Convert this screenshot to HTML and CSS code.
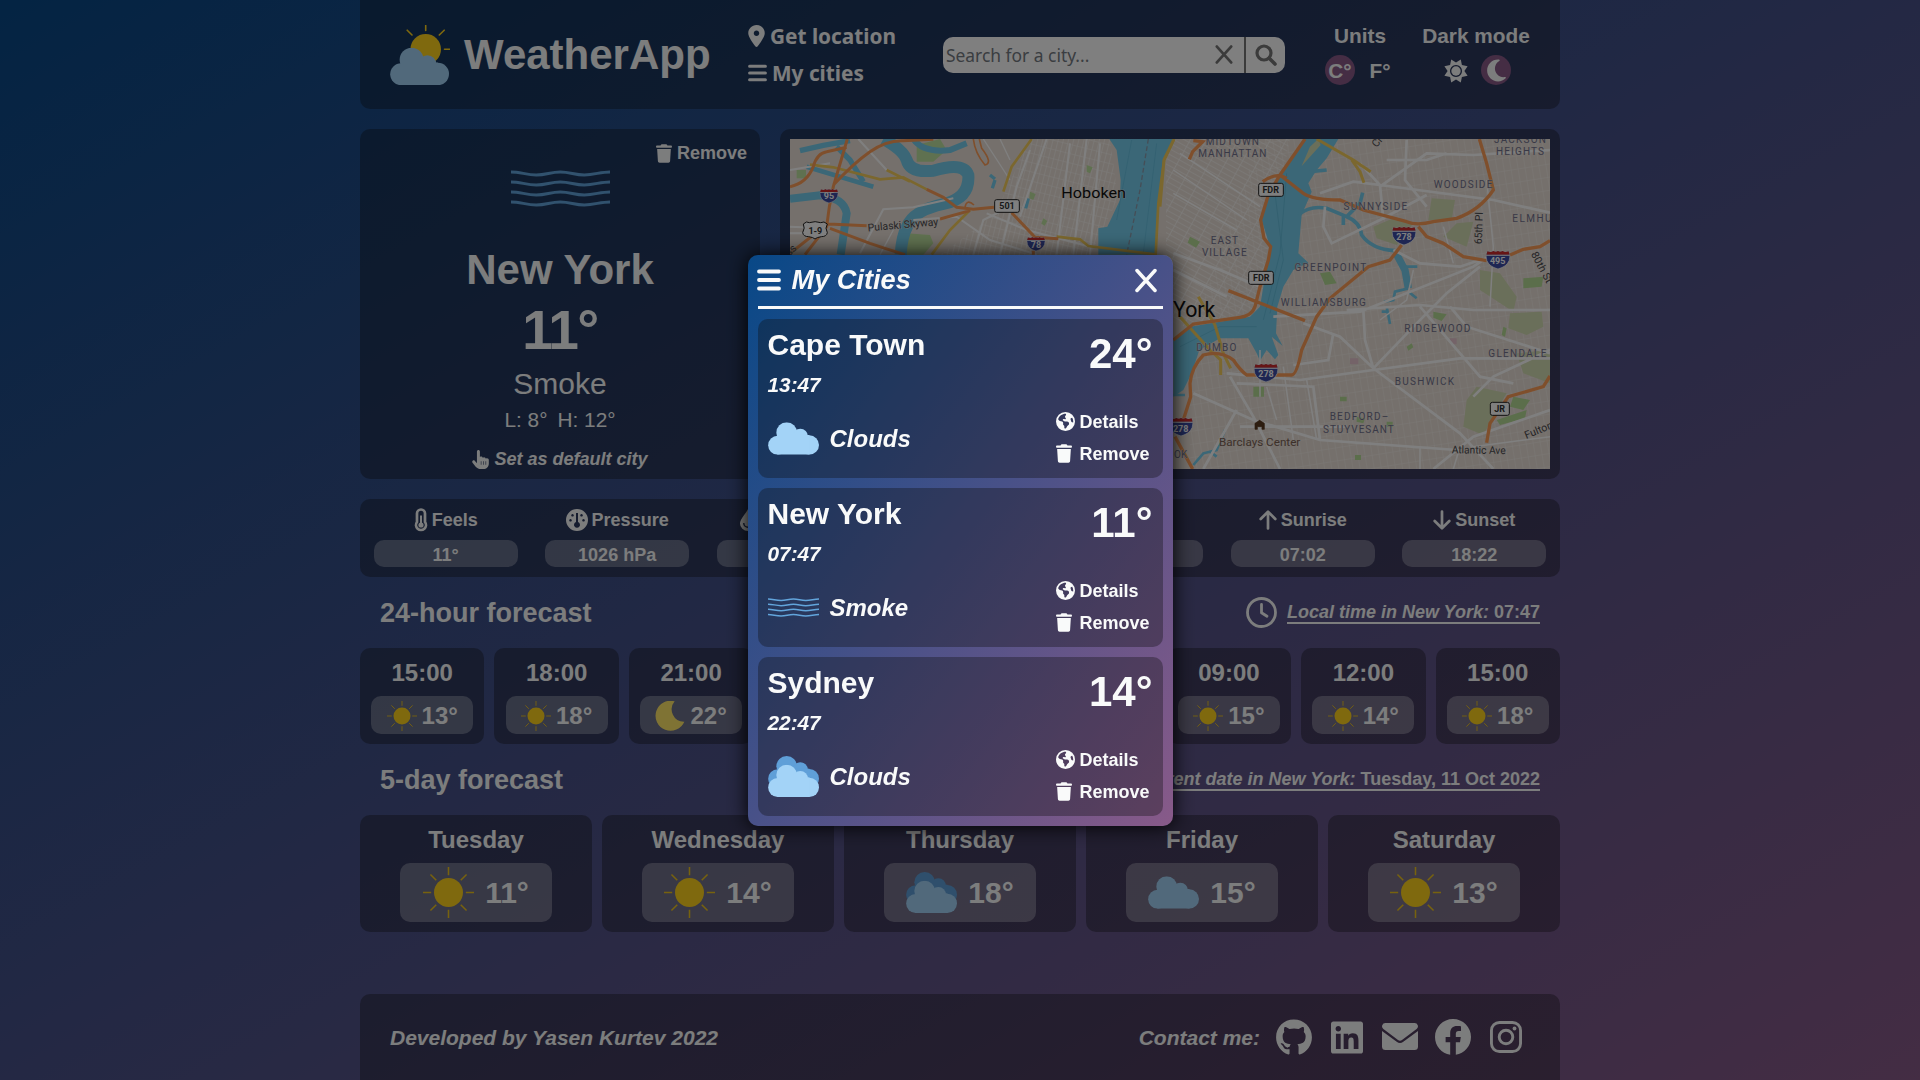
FILE: index.html
```html
<!DOCTYPE html>
<html lang="en">
<head>
<meta charset="utf-8">
<title>WeatherApp</title>
<link rel="stylesheet" href="styles.css">
</head>
<body>
<svg class="sprite" aria-hidden="true">
  <symbol id="bars" viewBox="0 0 24 22"><path d="M2 2.5H22M2 11H22M2 19.5H22" stroke="currentColor" stroke-width="3.8" stroke-linecap="round"/></symbol>
  <symbol id="cross" viewBox="0 0 22 24"><path d="M2 2L20 22M20 2L2 22" stroke="currentColor" stroke-width="3.5" stroke-linecap="round"/></symbol>
  <symbol id="pin" viewBox="0 0 384 512"><path fill="currentColor" d="M215.7 499.2C267 435 384 279.4 384 192C384 86 298 0 192 0S0 86 0 192c0 87.4 117 243 168.3 307.2c12.3 15.3 35.1 15.3 47.4 0zM192 256c-35.3 0-64-28.7-64-64s28.7-64 64-64s64 28.7 64 64s-28.7 64-64 64z"/></symbol>
  <symbol id="search" viewBox="0 0 22 22"><circle cx="9" cy="9" r="7" fill="none" stroke="currentColor" stroke-width="3.2"/><path d="M14.2 14.2L20 20" stroke="currentColor" stroke-width="3.6" stroke-linecap="round"/></symbol>
  <symbol id="trash" viewBox="0 0 448 512"><path fill="currentColor" d="M135.2 17.7L128 32H32C14.3 32 0 46.3 0 64S14.3 96 32 96H416c17.7 0 32-14.3 32-32s-14.3-32-32-32H320l-7.2-14.3C307.4 6.8 296.3 0 284.2 0H163.8c-12.1 0-23.2 6.8-28.6 17.7zM416 128H32L53.2 467c1.6 25.3 22.6 45 47.9 45H346.9c25.3 0 46.3-19.7 47.9-45L416 128z"/></symbol>
  <symbol id="globe" viewBox="0 0 512 512"><path fill="currentColor" fill-rule="evenodd" d="M57.7 193l9.4 16.4c8.3 14.5 21.9 25.2 38 29.8L163 255.7c17.2 4.9 29 20.6 29 38.5v39.9c0 11 6.2 21 16 25.9s16 14.9 16 25.9v39c0 15.6 14.9 26.9 29.9 22.6c16.1-4.6 28.6-17.5 32.7-33.8l2.8-11.2c4.2-16.9 15.2-31.4 30.3-40l8.1-4.6c15-8.5 24.2-24.5 24.2-41.7v-8.3c0-12.7-5.1-24.9-14.1-33.9l-3.9-3.9c-9-9-21.2-14.1-33.9-14.1H257c-11.1 0-22.1-2.9-31.8-8.4l-34.5-19.7c-4.3-2.5-7.6-6.5-9.2-11.2c-3.2-9.6 1.1-20 10.2-24.5l5.9-3c6.6-3.3 14.3-3.9 21.3-1.5l23.2 7.7c8.2 2.7 17.2-.4 21.9-7.5c4.7-7 4.2-16.3-1.2-22.8l-13.6-16.3c-10-12-9.9-29.5 .3-41.3l15.7-18.3c8.8-10.3 10.2-25 3.5-36.7l-2.4-4.2c-3.5-.2-6.9-.3-10.4-.3C163.1 48 84.4 108.9 57.7 193zM464 256c0-36.8-9.6-71.4-26.4-101.5L412 164.8c-15.7 6.3-23.8 23.8-18.5 39.8l16.9 50.7c3.5 10.4 12 18.3 22.6 20.9l29.1 7.3c1.2-9 1.8-18.2 1.8-27.5zM0 256a256 256 0 1 1 512 0A256 256 0 1 1 0 256z"/></symbol>
  <symbol id="hand" viewBox="0 0 448 512"><path fill="currentColor" fill-rule="evenodd" d="M128 40c0-22.100 17.900-40 40-40s40 17.900 40 40V188c8.500-7.600 19.700-12 32-12c20.600 0 38.200 13 45 31.200c8.800-9.300 21.200-15.200 35-15.200c25.300 0 46 19.500 47.900 44.300c8.500-7.700 19.800-12.300 32.100-12.300c26.500 0 48 21.500 48 48v96c0 79.500-64.500 144-144 144H231c-49 0-96-20-131-55L10 345c-14-17-13-42 3-56c17-14 42-13 56 3l59 62V40zM232 304v96h16v-96zm64 0v96h16v-96zm64 0v96h16v-96z"/></symbol>
  <symbol id="thermo" viewBox="0 0 14 24"><path d="M3 5.500a4 4 0 0 1 8 0V14a5 5 0 1 1-8 0z" fill="none" stroke="currentColor" stroke-width="2.700"/><circle cx="7" cy="17" r="2.600" fill="currentColor"/><path d="M7 7.500V16" stroke="currentColor" stroke-width="2"/></symbol>
  <symbol id="gauge" viewBox="0 0 22 22"><path fill="currentColor" fill-rule="evenodd" d="M11 0a11 11 0 1 1 0 22a11 11 0 0 1 0-22zM10 4v9a3 3 0 1 0 2 0V4zM6.500 5a1.300 1.300 0 1 0 .01 0zM15.500 5a1.300 1.300 0 1 0 .01 0zM4.500 10a1.300 1.300 0 1 0 .01 0zM17.500 10a1.300 1.300 0 1 0 .01 0z"/></symbol>
  <symbol id="drop" viewBox="0 0 16 22"><path fill="currentColor" fill-rule="evenodd" d="M8 0C9 3 16 10 16 14.500A8 7.500 0 0 1 0 14.500C0 10 7 3 8 0zM3 14a5 5 0 0 0 5 5v-1.500A3.500 3.500 0 0 1 4.500 14z"/></symbol>
  <symbol id="up" viewBox="0 0 18 20"><path d="M9 18.500V2M1.700 9L9 1.700L16.300 9" fill="none" stroke="currentColor" stroke-width="2.700" stroke-linecap="round" stroke-linejoin="round"/></symbol>
  <symbol id="down" viewBox="0 0 18 20"><path d="M9 1.500V18M1.700 11L9 18.300L16.300 11" fill="none" stroke="currentColor" stroke-width="2.700" stroke-linecap="round" stroke-linejoin="round"/></symbol>
  <symbol id="clock" viewBox="0 0 31 31"><circle cx="15.500" cy="15.500" r="14" fill="none" stroke="currentColor" stroke-width="2.800"/><path d="M15.500 7.500V15.800L21 19.300" fill="none" stroke="currentColor" stroke-width="2.800" stroke-linecap="round" stroke-linejoin="round"/></symbol>
  <symbol id="brightness" viewBox="0 0 26 26"><path fill="currentColor" fill-rule="evenodd" d="M8.200 1.400L13 4.600L17.800 1.400L18.900 7.100L24.600 8.200L21.400 13L24.600 17.800L18.900 18.900L17.800 24.600L13 21.400L8.200 24.600L7.100 18.900L1.400 17.800L4.600 13L1.400 8.200L7.100 7.100zM13 7a6 6 0 1 0 .01 0z"/><circle cx="13" cy="13" r="4.700" fill="currentColor"/></symbol>
  <symbol id="night" viewBox="0 0 384 512"><path fill="currentColor" d="M223.500 32C100 32 0 132.300 0 256S100 480 223.500 480c60.600 0 115.500-24.200 155.800-63.400c5-4.900 6.300-12.500 3.100-18.700s-10.100-9.700-17-8.500c-9.800 1.700-19.800 2.600-30.100 2.600c-96.900 0-175.500-78.800-175.500-176c0-65.800 36-123.100 89.300-153.300c6.100-3.500 9.200-10.500 7.700-17.300s-7.300-11.900-14.300-12.500c-6.300-.5-12.600-.8-19-.8z"/></symbol>
  <symbol id="github" viewBox="0 0 496 512"><path fill="currentColor" d="M165.900 397.400c0 2-2.300 3.600-5.200 3.600-3.300.3-5.600-1.300-5.600-3.600 0-2 2.300-3.600 5.200-3.600 3-.3 5.600 1.300 5.600 3.600zM244.800 8C106.100 8 0 113.300 0 252c0 110.900 69.800 205.800 169.500 239.200 12.800 2.300 17.300-5.600 17.300-12.100 0-6.200-.3-40.400-.3-61.400 0 0-70 15-84.700-29.800 0 0-11.400-29.100-27.800-36.600 0 0-22.900-15.700 1.600-15.400 0 0 24.900 2 38.600 25.800 21.900 38.600 58.600 27.500 72.900 20.900 2.300-16 8.800-27.100 16-33.700-55.900-6.200-112.300-14.300-112.300-110.500 0-27.500 7.600-41.300 23.600-58.900-2.600-6.500-11.100-33.300 2.600-67.900 20.900-6.500 69 27 69 27 20-5.600 41.500-8.500 62.800-8.500s42.800 2.900 62.800 8.500c0 0 48.100-33.600 69-27 13.700 34.700 5.200 61.400 2.600 67.900 16 17.700 25.800 31.500 25.800 58.900 0 96.500-58.900 104.200-114.800 110.500 9.200 7.900 17 22.900 17 46.400 0 33.700-.3 75.400-.3 83.600 0 6.500 4.600 14.400 17.300 12.100C428.200 457.800 496 362.900 496 252 496 113.300 383.500 8 244.800 8z"/></symbol>
  <symbol id="linkedin" viewBox="0 0 448 512"><path fill="currentColor" d="M416 32H31.900C14.300 32 0 46.500 0 64.300v383.400C0 465.500 14.300 480 31.900 480H416c17.600 0 32-14.500 32-32.300V64.300c0-17.800-14.400-32.300-32-32.300zM135.400 416H69V202.200h66.500V416zm-33.200-243c-21.300 0-38.500-17.300-38.500-38.500S80.900 96 102.200 96c21.200 0 38.500 17.300 38.500 38.500 0 21.300-17.200 38.500-38.500 38.500zm282.100 243h-66.400V312c0-24.800-.5-56.700-34.500-56.700-34.600 0-39.900 27-39.900 54.900V416h-66.400V202.200h63.700v29.200h.9c8.900-16.800 30.600-34.500 62.900-34.500 67.200 0 79.700 44.300 79.700 101.900V416z"/></symbol>
  <symbol id="mail" viewBox="0 0 36 28"><path fill="currentColor" d="M3.400 0H32.600A3.400 3.400 0 0 1 34.600 6.100L20 17a3.400 3.400 0 0 1-4 0L1.400 6.100A3.400 3.400 0 0 1 3.400 0zM0 7.900L14.700 18.800a5.500 5.500 0 0 0 6.600 0L36 7.900V23.500A3.500 3.500 0 0 1 32.500 27H3.500A3.500 3.500 0 0 1 0 23.500z"/></symbol>
  <symbol id="facebook" viewBox="8 8 496 494"><path fill="currentColor" d="M504 256C504 119 393 8 256 8S8 119 8 256c0 123.780 90.690 226.380 209.250 245V327.690h-63V256h63v-54.640c0-62.150 37-96.480 93.670-96.480 27.140 0 55.520 4.840 55.520 4.840v61h-31.280c-30.800 0-40.410 19.120-40.410 38.730V256h68.780l-11 71.690h-57.780V501C413.310 482.380 504 379.780 504 256z"/></symbol>
  <symbol id="instagram" viewBox="0 0 32 32"><rect x="1.450" y="1.450" width="29.100" height="29.100" rx="8" fill="none" stroke="currentColor" stroke-width="2.900"/><circle cx="16" cy="16" r="6.800" fill="none" stroke="currentColor" stroke-width="2.900"/><circle cx="24.500" cy="7.500" r="1.900" fill="currentColor"/></symbol>

  <symbol id="w-sun" viewBox="0 0 50 50"><circle cx="25" cy="25" r="14.200" fill="#ffd21c"/><path d="M25 0V8M25 42V50M0 25H8M42 25H50M7.300 7.300L13 13M37 37L42.700 42.700M42.700 7.300L37 13M13 37L7.300 42.700" stroke="#efc41c" stroke-width="1.500"/></symbol>
  <symbol id="w-moon" viewBox="0 0 90 90"><path fill="#ffe669" d="M59 1A45 45 0 1 0 88 62A37 37 0 0 1 59 1z"/></symbol>
  <symbol id="cloud-shape" viewBox="0 0 153 97"><circle cx="29" cy="68.500" r="28.500"/><circle cx="56" cy="31" r="31"/><circle cx="97" cy="42" r="23"/><circle cx="124" cy="68" r="29"/><rect x="28" y="38" width="96" height="59"/></symbol>
  <symbol id="w-cloud" viewBox="0 0 153 97"><use href="#cloud-shape" width="153" height="97" fill="#a3d3f7"/></symbol>
  <symbol id="w-clouds" viewBox="0 0 153 123"><use href="#cloud-shape" width="153" height="97" fill="#5f9fd8"/><use href="#cloud-shape" y="26" width="153" height="97" fill="#a3d3f7"/></symbol>
  <symbol id="w-smoke" viewBox="0 0 297 111"><g fill="none" stroke="#62a5dc" stroke-width="8.500"><path id="wave" d="M0 6C28 6 46 15 76 15S118 6 148 6S190 15 220 15S268 6 297 6"/><use href="#wave" y="30"/><use href="#wave" y="60"/><use href="#wave" y="90"/></g></symbol>
  <symbol id="w-logo" viewBox="0 0 60 60"><circle cx="35.700" cy="24.300" r="15.300" fill="#ffd21c"/><path d="M35.700 .5V5.500M54.500 24.300H59.500M49.300 10L54.200 5.200M22 10L17.200 5.200" stroke="#ffd21c" stroke-width="1.600" stroke-linecap="round"/><use href="#cloud-shape" y="22.800" width="59" height="37.400" fill="#a3d3f7"/></symbol>

  <symbol id="interstate" viewBox="0 0 72 56"><path d="M5 3Q16 7 22 2Q30 6 36 2Q42 6 50 2Q56 7 67 3Q74 18 69 30Q62 48 36 55Q10 48 3 30Q-2 18 5 3z" fill="#3c4da6" stroke="#fff" stroke-width="2"/><path d="M5 3Q16 7 22 2Q30 6 36 2Q42 6 50 2Q56 7 67 3L70 13H2z" fill="#cf2a2a"/><path d="M2 14.500H70" stroke="#fff" stroke-width="3"/></symbol>
</svg>

<div class="page">
  <header class="header panel">
    <div class="logo"><svg width="60" height="60"><use href="#w-logo"/></svg><h1>WeatherApp</h1></div>
    <nav class="nav">
      <a><svg width="17" height="22"><use href="#pin"/></svg>Get location</a>
      <a><svg class="nav-bars" width="19" height="18"><use href="#bars"/></svg>My cities</a>
    </nav>
    <div class="search">
      <span class="search-text">Search for a city...</span>
      <svg class="search-clear" width="18" height="19"><use href="#cross"/></svg>
      <span class="search-go"><svg width="22" height="22"><use href="#search"/></svg></span>
    </div>
    <div class="setting units"><span>Units</span><div class="options"><b class="on">C°</b><b>F°</b></div></div>
    <div class="setting mode"><span>Dark mode</span><div class="options"><b><svg width="26" height="26"><use href="#brightness"/></svg></b><b class="on"><svg width="19" height="25"><use href="#night"/></svg></b></div></div>
  </header>

  <section class="top">
    <div class="city panel">
      <div class="city-remove"><svg width="16" height="19"><use href="#trash"/></svg>Remove</div>
      <svg class="city-icon" width="99" height="37"><use href="#w-smoke"/></svg>
      <h2>New York</h2>
      <div class="city-temp">11°</div>
      <div class="city-state">Smoke</div>
      <div class="city-range"><span>L: 8°</span><span>H: 12°</span></div>
      <div class="city-default"><svg width="17" height="19"><use href="#hand"/></svg>Set as default city</div>
    </div>
    <div class="map-card panel">
      <svg class="map" width="760" height="330" viewBox="0 0 760 330">
        <defs>
          <pattern id="streets" width="7" height="13" patternUnits="userSpaceOnUse" patternTransform="rotate(-9)"><path d="M0 0H7M0 0V13" stroke="#fff" stroke-width=".9" opacity=".6"/></pattern>
          <pattern id="avenues" width="5" height="14" patternUnits="userSpaceOnUse" patternTransform="rotate(-61)"><path d="M0 0H5M0 0V14" stroke="#fff" stroke-width="1.300" opacity=".75"/></pattern>
          <pattern id="blocks" width="5" height="9" patternUnits="userSpaceOnUse" patternTransform="rotate(14)"><path d="M0 0H5M0 0V9" stroke="#fff" stroke-width="1.200" opacity=".75"/></pattern>
        </defs>
        <rect width="760" height="330" fill="#ebe1d8"/>
        <path d="M470 0H760V330H400V200z" fill="url(#streets)"/>
        <path d="M376 0H500L480 100L465 170L400 190L376 180z" fill="url(#avenues)"/>
        <path d="M240 0H320L328 60L300 116H150L205 75z" fill="url(#blocks)"/>

        <g transform="translate(-20 -19) scale(.33333)" fill="none">
          <g fill="#bfe3a0"><path d="M440 75L510 57L530 90L490 125L440 125z"/><path d="M410 340L480 345L490 370L460 404H400z"/><path d="M780 215L797 222L790 240L778 235zM950 135L968 142L960 160L950 155zM1130 367h20v18h-20zM820 295l12 8-8 14-10-6z"/><path d="M80 150h28v25h-28z"/></g>
          <g stroke="#76cfee">
            <path d="M340 57Q400 90 410 120Q420 160 490 152Q580 125 595 165Q600 235 520 252Q430 272 412 318Q395 350 392 404" stroke-width="36"/>
            <path d="M430 57Q460 100 540 90L590 70" stroke-width="18"/>
            <path d="M60 236L150 226Q222 234 230 280L212 404" stroke-width="24"/>
            <path d="M110 140L310 200" stroke-width="14"/>
            <path d="M90 92L160 76L240 62M200 80L240 120L280 185" stroke-width="16"/>
            <path d="M660 165l15 12M675 180l-8 25M775 235l-8 30" stroke-width="10"/>
          </g>
          <path d="M1018 57H1212L1180 130L1165 260L1155 404H985V325L1012 320L1050 240L1052 180L1040 90z" fill="#76cfee"/>
          <path d="M1135 57L1110 210L1070 404" stroke="#8a9cae" stroke-width="4" stroke-dasharray="14 8"/>
          <path d="M1160 70L1120 400M1085 60L1040 300" stroke="#62bddf" stroke-width="2"/>
          <g stroke="#fff" stroke-width="6">
            <path d="M60 150L180 130M60 320L170 325M265 57L350 150M60 340h40M270 400L340 268L430 262L550 235M430 300L560 290L660 360L800 404M610 404L640 300L720 260M780 90L740 200L690 404M830 57L750 290M900 70L860 404M950 57L910 404M650 280L770 330L960 380M990 70L960 404"/>
            <path d="M640 57L720 180M330 404L370 330M690 57L720 120" stroke-width="4"/>
          </g>
          <g stroke="#f6cf5c" stroke-width="8"><path d="M120 134L190 142L330 178L400 172L470 208M350 150L420 185M785 57L725 140L700 215M600 270L540 330L485 404M860 350L930 358L955 378L1160 404M1212 57L1182 120L1165 250L1157 404"/></g>
          <g stroke="#ff9e58" stroke-width="9">
            <path d="M60 200Q110 190 130 140Q140 100 170 95L230 82M232 57L190 200L178 260L170 320L105 404M190 195Q250 130 300 95Q350 60 400 62L490 58M470 208L520 232L560 262L610 268L672 262M510 297L600 272M175 312L290 317M180 325L300 370L345 385L405 404M60 400L130 345M725 278L795 352L865 356M790 404v-12"/>
            <path d="M610 57Q615 100 645 135Q670 130 635 85L628 57M585 262Q590 235 612 255" stroke-width="5"/>
          </g>
        </g>

        <g transform="translate(370 -19) scale(.33333)" fill="none">
          <g fill="#d5deb4"><path d="M815 235L885 240L875 300L805 300zM640 320L700 295L760 310L710 375L650 355zM890 310L940 305L920 380L850 350zM960 450L1020 460L1070 530L1060 575L960 510zM1050 580L1145 575L1150 620L1100 645L1045 625zM950 800L1040 820L1010 870L970 945L910 920L920 840zM1070 700L1170 690V790L1090 760z"/></g>
          <g fill="#b6dd97"><path d="M480 460L510 455L530 490L495 495zM1090 475L1150 470L1145 500L1090 505zM1010 900L1100 870L1095 895L1020 915zM1060 830L1110 840L1090 870L1050 860zM540 830h20v14h-20zM740 680l15-10 5 12-15 10zM280 800h32v30h-32zM820 575l40 8-15 20-25-10zM90 350l30 15-12 18-25-15zM590 890l25 5-5 15-20-5zM1030 620l10 5-5 25-10-5zM680 905h18v15h-18zM585 1005h18v15h-18z"/></g>
          <path d="M570 715h25v18h-25zM870 655h20v18h-20z" fill="#e8c6d0"/>
          <path d="M0 57H42L10 110L0 170z" fill="#76cfee"/>
          <path d="M430 57H535L500 115L470 150L445 190L455 215L425 285L415 400L445 428L400 450L370 500L352 560L348 640L368 678L335 650L355 705L345 718L320 690L300 722L290 700L265 655L180 655L118 690L95 760L70 810L40 830V660L90 620L270 590L300 560L330 380L305 300L330 210L390 120z" fill="#76cfee"/>
          <path d="M450 80L475 57L482 75L425 138z" fill="#d5deb4"/>
          <path d="M345 220L370 420L330 580M380 160L360 400L310 600M60 680L180 620L290 620" stroke="#5fb9da" stroke-width="2"/>
          <g stroke="#76cfee"><path d="M415 285Q450 255 500 265L560 290Q600 305 605 345Q635 388 705 392M550 285v30M560 290L600 250L608 218M500 150L450 155" stroke-width="11"/><path d="M708 400L735 450L745 505" stroke-width="22"/><path d="M735 440H772M745 505L705 515L700 540L672 545M745 515L770 535M680 560L690 612M665 575h20M40 825h35M100 1035L130 1000L170 990L195 930M150 995L170 1010" stroke-width="8"/></g>
          <g stroke="#fff" stroke-width="8">
            <path d="M480 220L580 185L660 195L1000 240L1170 278M495 260L490 320L515 370L660 300L800 225M660 200L800 100L940 105L1170 90M600 130L660 195L670 300M680 120H800L860 100M740 60L735 180L800 260"/>
            <path d="M40 400L180 450L300 500M40 450L200 530M340 590L600 575L940 440L1000 400M430 610L540 650L640 745L900 940L1000 1047M200 760L420 780L640 750L900 715H1170M560 570L780 555L940 570H1170M640 745L770 610L860 520L960 440M100 820L280 900L480 960L890 990M210 770L280 890L360 1047M230 870L130 1047M520 640L505 720L400 735M610 570L615 660L640 745M780 560L900 700L960 770L1060 790M820 1047L940 950L1170 870M870 560L920 620L1170 700M940 830L1000 770L1170 690M700 390L780 430L900 440L960 420M240 920H560M230 790L460 800L480 960"/>
            <path d="M300 690V830M320 800L350 900M370 740L400 960M440 780L470 960M780 980V1047M900 980L880 1047M940 980L1170 950M980 180L1000 380L990 560M850 320L880 430M760 450L740 540L660 600M60 100L300 260M40 150L260 300M40 220L230 330" stroke-width="4.500"/>
          </g>
          <g stroke="#f6cf5c" stroke-width="9"><path d="M470 57L580 120L632 155M575 120L600 155L612 188M42 57L12 120L0 260M115 530L165 615L190 700L212 745M60 590L150 690L182 720V765"/></g>
          <g stroke="#ff9e58" stroke-width="10">
            <path d="M435 57L360 165L325 225L302 300L312 355L332 380L325 420L300 500L285 560Q275 588 240 592L100 612L40 660M360 165L430 220Q460 240 540 240L610 270L740 305Q770 318 820 305L890 295Q960 270 1000 210L980 130L958 57M775 320L800 350L850 370L910 410L980 422M1050 405L1090 388L1140 380L1170 362M205 512L435 602M725 375L690 420L625 440L510 535L470 590L425 690Q410 765 395 765H260Q240 750 220 720Q180 690 130 705Q95 740 90 790L92 830L70 900M45 950L98 1047M980 968L990 910L1045 830L1150 800L1170 768M100 62L128 65L98 95L88 118M308 185Q350 155 380 175"/>
          </g>
        </g>

        <g class="map-areas" transform="translate(370 -19) scale(.33333)">
          <text x="217" y="74" textLength="160">MIDTOWN</text><text x="217" y="110" textLength="204">MANHATTAN</text>
          <text x="193" y="371" textLength="82">EAST</text><text x="193" y="408" textLength="134">VILLAGE</text>
          <text x="511" y="454" textLength="215">GREENPOINT</text><text x="490" y="559" textLength="255">WILLIAMSBURG</text>
          <text x="646" y="269" textLength="191">SUNNYSIDE</text><text x="909" y="204" textLength="176">WOODSIDE</text>
          <text x="1080" y="68" textLength="156">JACKSON</text><text x="1080" y="104" textLength="144">HEIGHTS</text>
          <text x="1127" y="305" textLength="140">ELMHUR</text>
          <text x="832" y="635" textLength="198">RIDGEWOOD</text><text x="1072" y="710" textLength="174">GLENDALE</text>
          <text x="793" y="794" textLength="178">BUSHWICK</text><text x="169" y="694" textLength="120">DUMBO</text>
          <text x="597" y="900" textLength="176">BEDFORD–</text><text x="595" y="938" textLength="212">STUYVESANT</text>
          <text x="62" y="1013">OK</text>
          <text class="map-poi" x="299" y="977" textLength="244" lengthAdjust="spacingAndGlyphs">Barclays Center</text>
          <g class="map-road"><text x="956" y="1001" textLength="162" lengthAdjust="spacingAndGlyphs" transform="rotate(1 956 1001)">Atlantic Ave</text><text x="1140" y="940" transform="rotate(-22 1140 940)">Fulton</text><text x="967" y="325" textLength="96" lengthAdjust="spacingAndGlyphs" transform="rotate(-88 967 325)">65th Pl</text><text x="1136" y="447" transform="rotate(62 1136 447)">80th St</text><text x="660" y="72" transform="rotate(-50 660 72)">Cr</text></g>
          <path d="M285 910L299 901L313 910V928H306V920H292V928H285zM298 900V908" fill="#5a3a20" stroke="#5a3a20" stroke-width="2"/>
          <text class="map-city" x="166" y="592" text-anchor="end">New York</text>
        </g>
        <g transform="translate(-20 -19) scale(.33333)"><text class="map-town" x="971" y="234" textLength="194" lengthAdjust="spacingAndGlyphs">Hoboken</text><g class="map-road"><text x="399" y="325" transform="rotate(-5 399 315)" textLength="212" lengthAdjust="spacingAndGlyphs">Pulaski Skyway</text><text x="70" y="398" transform="rotate(-45 70 398)">ss</text></g></g>

        <g class="shields" transform="translate(-20 -19) scale(.33333)">
          <use href="#interstate" x="149" y="200" width="56" height="56"/><text x="177" y="238">95</text>
          <use href="#interstate" x="770" y="344" width="56" height="56"/><text x="798" y="383">78</text>
          <rect x="674" y="239" width="74" height="38" rx="6"/><text class="dark" x="711" y="267">501</text>
          <path class="us" d="M100 312Q110 302 118 308Q136 302 152 308Q162 302 172 312Q164 324 172 338Q170 350 154 350Q140 352 135 357Q130 352 116 350Q100 350 98 338Q106 324 100 312z"/><text class="dark" x="136" y="341">1-9</text>
        </g>
        <g class="shields" transform="translate(370 -19) scale(.33333)">
          <use href="#interstate" x="695" y="319" width="74" height="57"/><text x="732" y="360">278</text>
          <use href="#interstate" x="977" y="391" width="74" height="57"/><text x="1013" y="433">495</text>
          <use href="#interstate" x="281" y="730" width="74" height="57"/><text x="318" y="771">278</text>
          <use href="#interstate" x="26" y="892" width="74" height="57"/><text x="62" y="935">278</text>
          <rect x="296" y="190" width="74" height="39" rx="6"/><text class="dark" x="332" y="218">FDR</text>
          <rect x="266" y="454" width="74" height="39" rx="6"/><text class="dark" x="304" y="483">FDR</text>
          <rect x="991" y="847" width="57" height="39" rx="6"/><text class="dark" x="1019" y="877">JR</text>
        </g>
      </svg>
    </div>
  </section>

  <section class="stats panel">
    <div class="stat"><span><svg width="14" height="24"><use href="#thermo"/></svg>Feels</span><b>11°</b></div>
    <div class="stat"><span><svg width="22" height="22"><use href="#gauge"/></svg>Pressure</span><b>1026 hPa</b></div>
    <div class="stat"><span><svg width="16" height="22"><use href="#drop"/></svg>Humidity</span><b>71%</b></div>
    <div class="stat"><span>Wind</span><b>2 m/s</b></div>
    <div class="stat"><span>Clouds</span><b>0%</b></div>
    <div class="stat"><span><svg width="18" height="20"><use href="#up"/></svg>Sunrise</span><b>07:02</b></div>
    <div class="stat"><span><svg width="18" height="20"><use href="#down"/></svg>Sunset</span><b>18:22</b></div>
  </section>

  <div class="title"><h3>24-hour forecast</h3><div class="note"><svg width="31" height="31"><use href="#clock"/></svg><span><i>Local time in New York:</i> 07:47</span></div></div>
  <section class="hours">
    <div class="hour panel"><span>15:00</span><b><svg><use href="#w-sun"/></svg>13°</b></div>
    <div class="hour panel"><span>18:00</span><b><svg><use href="#w-sun"/></svg>18°</b></div>
    <div class="hour panel"><span>21:00</span><b><svg><use href="#w-moon"/></svg>22°</b></div>
    <div class="hour panel"><span>00:00</span><b><svg><use href="#w-moon"/></svg>18°</b></div>
    <div class="hour panel"><span>03:00</span><b><svg><use href="#w-moon"/></svg>14°</b></div>
    <div class="hour panel"><span>06:00</span><b><svg><use href="#w-moon"/></svg>12°</b></div>
    <div class="hour panel"><span>09:00</span><b><svg><use href="#w-sun"/></svg>15°</b></div>
    <div class="hour panel"><span>12:00</span><b><svg><use href="#w-sun"/></svg>14°</b></div>
    <div class="hour panel"><span>15:00</span><b><svg><use href="#w-sun"/></svg>18°</b></div>
  </section>

  <div class="title"><h3>5-day forecast</h3><div class="note"><span><i>Current date in New York:</i> Tuesday, 11 Oct 2022</span></div></div>
  <section class="days">
    <div class="day panel"><span>Tuesday</span><b><svg><use href="#w-sun"/></svg>11°</b></div>
    <div class="day panel"><span>Wednesday</span><b><svg><use href="#w-sun"/></svg>14°</b></div>
    <div class="day panel"><span>Thursday</span><b><svg><use href="#w-clouds"/></svg>18°</b></div>
    <div class="day panel"><span>Friday</span><b><svg><use href="#w-cloud"/></svg>15°</b></div>
    <div class="day panel"><span>Saturday</span><b><svg><use href="#w-sun"/></svg>13°</b></div>
  </section>

  <footer class="footer panel">
    <span>Developed by Yasen Kurtev 2022</span>
    <div class="contact"><span>Contact me:</span>
      <svg width="36" height="37"><use href="#github"/></svg>
      <svg width="32" height="37"><use href="#linkedin"/></svg>
      <svg width="36" height="28"><use href="#mail"/></svg>
      <svg class="facebook" width="36" height="36"><use href="#facebook"/></svg>
      <svg width="32" height="32"><use href="#instagram"/></svg>
    </div>
  </footer>
</div>

<div class="overlay">
  <div class="modal">
    <div class="modal-head"><svg class="menu" width="24" height="22"><use href="#bars"/></svg><h2>My Cities</h2><svg class="close" width="22" height="25"><use href="#cross"/></svg></div>
    <article class="saved">
      <div class="saved-info"><h3>Cape Town</h3><time>13:47</time><div class="saved-state"><svg><use href="#w-cloud"/></svg>Clouds</div></div>
      <div class="saved-side"><strong>24°</strong><div class="actions"><a><i><svg width="19" height="19"><use href="#globe"/></svg></i>Details</a><a><i><svg width="16" height="19"><use href="#trash"/></svg></i>Remove</a></div></div>
    </article>
    <article class="saved">
      <div class="saved-info"><h3>New York</h3><time>07:47</time><div class="saved-state"><svg><use href="#w-smoke"/></svg>Smoke</div></div>
      <div class="saved-side"><strong>11°</strong><div class="actions"><a><i><svg width="19" height="19"><use href="#globe"/></svg></i>Details</a><a><i><svg width="16" height="19"><use href="#trash"/></svg></i>Remove</a></div></div>
    </article>
    <article class="saved">
      <div class="saved-info"><h3>Sydney</h3><time>22:47</time><div class="saved-state"><svg><use href="#w-clouds"/></svg>Clouds</div></div>
      <div class="saved-side"><strong>14°</strong><div class="actions"><a><i><svg width="19" height="19"><use href="#globe"/></svg></i>Details</a><a><i><svg width="16" height="19"><use href="#trash"/></svg></i>Remove</a></div></div>
    </article>
  </div>
</div>
</body>
</html>
```
FILE: styles.css
```css
* { box-sizing: border-box; margin: 0; padding: 0; }

body {
  height: 1080px;
  overflow: hidden;
  font-family: "Liberation Sans", Arial, sans-serif;
  color: #f9fafa;
  background: linear-gradient(to right bottom, #084887, #885a89);
}

h1, h2, h3, strong { font-weight: 700; }
svg { display: block; flex: none; }
.sprite { display: none; }

.page { width: 1200px; height: 1080px; margin: 0 auto; display: flex; flex-direction: column; }
.panel { background: rgba(14, 14, 14, .35); border-radius: 10px; }

/* Header */
.header { height: 109px; border-radius: 0 0 10px 10px; padding: 0 29px 0 30px; display: flex; align-items: center; }
.logo { width: 358px; display: flex; align-items: center; gap: 14px; }
.logo svg { margin-top: 1px; }
.logo h1 { font-size: 42px; line-height: 50px; }
.nav { width: 195px; font: 700 20.800px/37px "Noto Sans", Tahoma, sans-serif; }
.nav a { display: flex; align-items: center; gap: 5px; }
.search { width: 342px; height: 36px; margin-right: 35px; display: flex; align-items: center; background: #fff; border-radius: 10px; color: #777; }
.search-text { flex: 1; padding-left: 3px; font: 17.400px/36px "Noto Sans", Tahoma, sans-serif; color: #757b82; }
.search-clear { margin-right: 11px; }
.search-go { width: 41px; height: 36px; padding: 7px 0 0 9px; border-left: 2px solid #777; }
.setting { display: flex; flex-direction: column; align-items: center; gap: 7px; font-size: 20.800px; line-height: 24px; font-weight: 700; white-space: nowrap; }
.units { width: 80px; margin-right: 21px; }
.mode { width: 110px; }
.options { display: flex; gap: 10px; }
.options b { width: 30px; height: 30px; padding-top: 1px; display: flex; align-items: center; justify-content: center; border-radius: 50%; }
.options .on { background: #8a5a88; }

/* Current city and map */
.top { height: 350px; margin-top: 20px; display: flex; gap: 20px; }
.city { width: 400px; padding-top: 12px; display: flex; flex-direction: column; align-items: center; white-space: nowrap; }
.city-remove { align-self: flex-end; margin-right: 13px; display: flex; align-items: center; gap: 5px; font-size: 18px; line-height: 24px; font-weight: 700; }
.city-icon { margin-top: 5px; }
.city h2 { margin-top: 38px; font-size: 42px; line-height: 50px; }
.city-temp { margin-top: 5px; font-size: 55px; line-height: 60px; font-weight: 700; letter-spacing: -1.500px; }
.city-state { margin-top: 6px; font-size: 30px; line-height: 36px; }
.city-range { margin-top: 6px; display: flex; gap: 10px; font-size: 20.800px; line-height: 24px; }
.city-default { margin-top: 15px; display: flex; align-items: center; gap: 5px; font-size: 18px; line-height: 24px; font-style: italic; font-weight: 700; }
.map-card { width: 780px; padding: 10px; }
.map { overflow: hidden; }
.map text { font-family: Roboto, sans-serif; }
.map-areas text { font-size: 30px; fill: #73738f; text-anchor: middle; stroke: #ebe1d8; stroke-width: 2px; paint-order: stroke; }
.map-areas .map-poi { fill: #7a6255; font-size: 34px; }
.map .map-road text { fill: #4c4c50; font-size: 32px; text-anchor: middle; stroke: #ebe1d8; stroke-width: 2px; paint-order: stroke; }
.map-areas .map-city { fill: #111; font-size: 64px; text-anchor: end; }
.map .map-town { fill: #111; font-size: 46px; text-anchor: middle; stroke: #ebe1d8; stroke-width: 2px; paint-order: stroke; }
.shields text { font-size: 27px; font-weight: 700; fill: #fff; text-anchor: middle; }
.shields .dark { fill: #333; }
.shields rect, .shields .us { fill: #fff; stroke: #222; stroke-width: 3px; }

/* Details strip */
.stats { height: 78px; margin-top: 20px; padding-top: 9px; display: grid; grid-template-columns: repeat(7, 1fr); font-size: 18px; font-weight: 700; }
.stat { display: flex; flex-direction: column; align-items: center; gap: 8px; }
.stat span { height: 24px; display: flex; align-items: center; gap: 4px; line-height: 24px; }
.stat b { width: 144px; height: 27px; padding-top: 2px; border-radius: 10px; background: rgba(255, 255, 255, .28); text-align: center; line-height: 27px; }

/* Forecasts */
.title { height: 71px; padding: 0 20px; display: flex; align-items: center; justify-content: space-between; }
.title h3 { font-size: 27px; line-height: 32px; }
.note { display: flex; align-items: center; gap: 10px; font-size: 18px; font-weight: 700; }
.note span { padding-top: 2px; border-bottom: 2px solid; line-height: 19px; }
.hours, .days { display: grid; gap: 10px; font-weight: 700; text-align: center; }
.hours { grid-template-columns: repeat(9, 1fr); }
.days { grid-template-columns: repeat(5, 1fr); }
.hour, .day { display: flex; flex-direction: column; align-items: center; gap: 9px; padding-top: 11px; font-size: 24px; line-height: 28px; }
.hour { height: 96px; }
.day { height: 117px; }
.hour b, .day b { display: flex; align-items: center; justify-content: center; border-radius: 10px; background: rgba(255, 255, 255, .28); }
.hour b { width: 102px; height: 38px; gap: 5px; padding-top: 1px; }
.hour svg { width: 30px; height: 30px; }
.day b { width: 152px; height: 59px; gap: 11px; font-size: 30px; }
.day svg { width: 51px; height: 51px; }

/* Footer */
.footer { height: 86px; margin-top: 62px; padding: 0 38px 0 30px; border-radius: 10px 10px 0 0; display: flex; align-items: center; justify-content: space-between; font-size: 21px; font-style: italic; font-weight: 700; }
.footer span { padding-top: 1px; }
.contact { display: flex; align-items: center; gap: 19px; }
.contact span { margin-right: -3px; }
.contact .facebook { margin-left: -2px; }

/* My cities window */
.overlay { position: fixed; inset: 0; display: grid; place-items: center; background: rgba(0, 0, 0, .5); }
.modal { width: 425px; height: 571px; padding: 10px; display: flex; flex-direction: column; gap: 10px; border-radius: 10px; background: linear-gradient(to right bottom, #084887, #885a89); box-shadow: 0 0 20px #000; }
.modal-head { height: 44px; padding-bottom: 10px; display: flex; align-items: center; border-bottom: 3px solid #f9fafa; }
.modal-head h2 { flex: 1; margin-left: 11px; font-size: 27.200px; line-height: 30px; font-style: italic; }
.modal-head .menu { margin-left: -1px; }
.modal-head .close { margin-right: 6px; }
.saved { height: 159px; padding: 9px 10px 0; display: flex; justify-content: space-between; border-radius: 10px; background: rgba(14, 14, 14, .35); font-weight: 700; }
.saved h3 { font-size: 30px; line-height: 34px; }
.saved time { display: block; margin-top: 11px; font-size: 20.800px; line-height: 24px; font-style: italic; }
.saved-state { height: 60px; margin-top: 12px; display: flex; align-items: center; gap: 11px; font-size: 24px; font-style: italic; }
.saved-state svg { width: 51px; height: 41px; }
.saved-side { display: flex; flex-direction: column; align-items: flex-end; }
.saved-side strong { margin-top: 2px; font-size: 42px; line-height: 48px; }
.actions { margin: 28px 3px 0 0; font-size: 18px; line-height: 32px; }
.actions a { display: flex; align-items: center; }
.actions i { width: 23px; display: flex; }
```
